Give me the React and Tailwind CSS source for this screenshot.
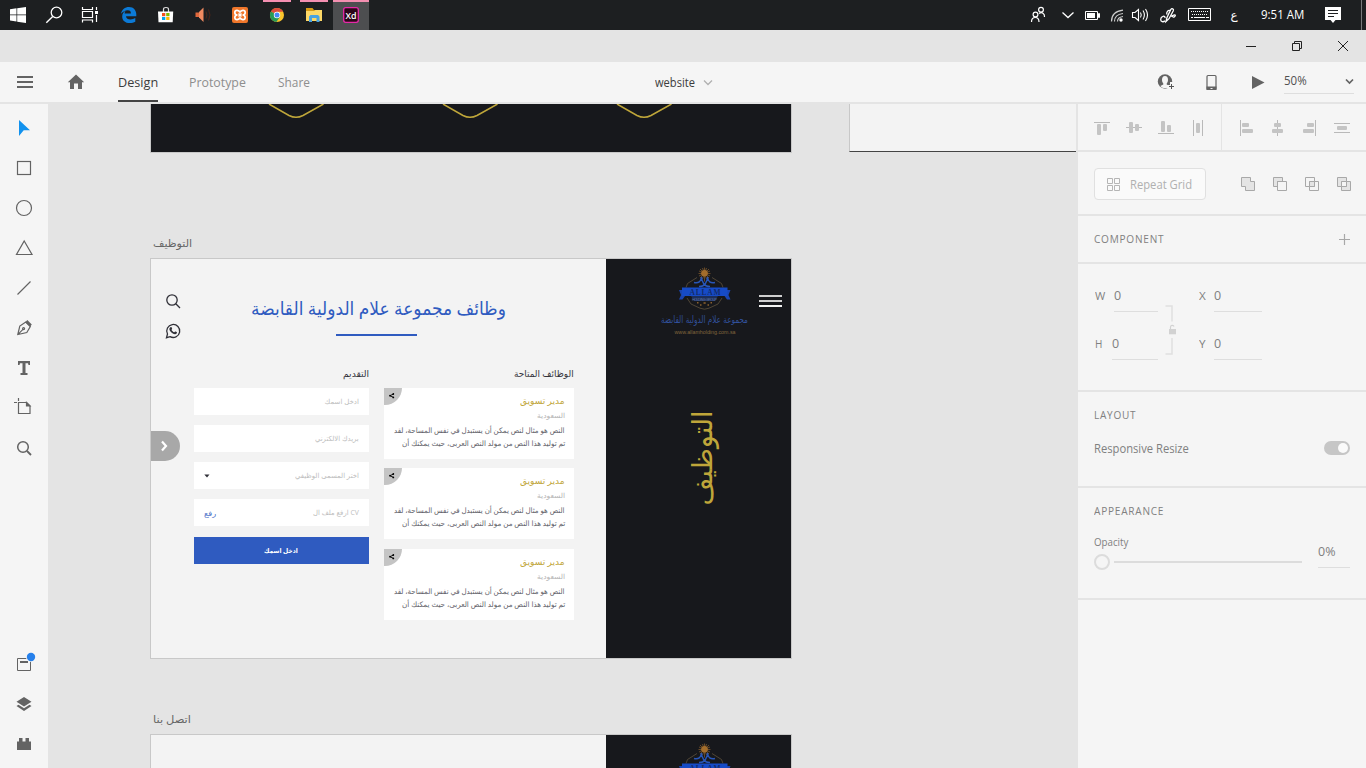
import { useLayoutEffect, useRef } from "react";

/* Single line of text stretched horizontally to the width of its box. */
function Fit({ className = "", children, rtl = false }) {
  const box = useRef(null);
  const line = useRef(null);
  useLayoutEffect(() => {
    const w = line.current.offsetWidth;
    if (w) line.current.style.transform = `scaleX(${box.current.clientWidth / w})`;
  });
  return (
    <span ref={box} dir="ltr" className={"flex shrink-0 justify-start whitespace-nowrap " + className}>
      <span ref={line} dir={rtl ? "rtl" : "ltr"} className="block shrink-0 origin-left">{children}</span>
    </span>
  );
}

/* Icon cell whose view box is given in window coordinates. */
function Cell({ x, y, w, h, children, className = "" }) {
  return (
    <svg width={w} height={h} viewBox={`${x} ${y} ${w} ${h}`} fill="none" className={"block shrink-0 " + className}>
      {children}
    </svg>
  );
}

function Taskbar() {
  return (
    <div className="flex h-[30px] items-center bg-[#1d1f21] text-white">
      <Cell x={0} y={0} w={36} h={30}>
        <path fill="#fff" d="M10 9.200l6.500-.9v6.200H10zM17.200 8.200L26 7v7.500h-8.800zM10 15.300h6.500v6.200l-6.500-.9zM17.200 15.300H26V23l-8.800-1.300z" />
      </Cell>
      <Cell x={36} y={0} w={36} h={30}>
        <circle cx="56.500" cy="12.500" r="5.300" stroke="#fff" strokeWidth="1.300" />
        <path d="M52.700 16.500L46.300 22.700" stroke="#fff" strokeWidth="1.400" />
      </Cell>
      <Cell x={72} y={0} w={36} h={30}>
        <path d="M82.500 7v2.500h10V7M82.500 22.500V20h10v2.500M82.500 11.500h10v6h-10zM96.500 7v3M96.500 15v7" stroke="#fff" strokeWidth="1.200" />
        <rect x="95" y="11" width="3" height="3" fill="#fff" />
      </Cell>
      <div className="ml-[3px] flex gap-px">
        <Cell x={111} y={0} w={36} h={30}>
          <path fill="#0c7ad6" d="M121 13.800C121.800 9.500 125 7 129 7c4.800 0 7.300 3.500 7.300 7.600v1.600h-10.300c.2 2.300 2.100 3.300 4.400 3.300 1.900 0 3.400-.5 4.900-1.400v3.600c-1.500.9-3.400 1.300-5.500 1.300-4.600 0-7.600-2.500-7.600-6.600 0-2.400 1.400-4.500 3.400-5.600-.6.800-.9 1.700-1 2.600h6.300c0-1.900-.9-3.100-3.100-3.100-2.600 0-4.900 1.200-6.800 3.500z" />
        </Cell>
        <Cell x={148} y={0} w={36} h={30}>
          <path d="M163.500 12V9.300c0-2.400 5-2.400 5 0V12" stroke="#ddd" strokeWidth="1.200" />
          <path fill="#fff" d="M158 11.500h15.200l-.5 10.800h-14.200z" />
          <path fill="#f25022" d="M162 13h3.300v3.200H162z" /><path fill="#7fba00" d="M166.200 13h3.300v3.200h-3.300z" />
          <path fill="#00a4ef" d="M162 17h3.300v3H162z" /><path fill="#ffb900" d="M166.200 17h3.300v3h-3.300z" />
        </Cell>
        <Cell x={185} y={0} w={36} h={30}>
          <path fill="#e0683c" d="M195.500 12.500h3.500v4.500h-3.500z" /><path fill="#f08a60" d="M199 12l4.500-4.500v14.500L199 17.500z" />
          <path d="M206 11.500q1.800 3.500 0 7M208.500 9.500q3 5.500 0 11" stroke="#4a2519" strokeWidth="1" />
        </Cell>
        <Cell x={222} y={0} w={36} h={30}>
          <rect x="232" y="7" width="16" height="16" rx="2" fill="#f0762a" />
          <path d="M240 12.500c-.8-2.500-5-3-5.200 0 0 1.700 1.200 2.500 2.700 2.500-1.500 0-2.700.8-2.700 2.500.2 3 4.400 2.500 5.200 0M240 12.500c.8-2.500 5-3 5.200 0 0 1.700-1.200 2.500-2.700 2.500 1.500 0 2.700.8 2.700 2.500-.2 3-4.400 2.500-5.200 0M238.500 13.500l3 3M241.500 13.500l-3 3" stroke="#fff" strokeWidth="1.700" />
        </Cell>
        <Cell x={259} y={0} w={36} h={30}>
          <path fill="#f48fb1" d="M263 0h28v2h-28z" />
          <circle cx="277" cy="15" r="7" fill="#fbc52c" />
          <path fill="#dd4b3e" d="M277 15L270.900 11.500A7 7 0 0 1 283.100 11.700H277z" />
          <path fill="#279a57" d="M277 15L270.900 11.500A7 7 0 0 0 276.300 22L280 17z" />
          <circle cx="277" cy="15" r="3.200" fill="#fff" /><circle cx="277" cy="15" r="2.500" fill="#4688f4" />
        </Cell>
        <Cell x={296} y={0} w={36} h={30}>
          <path fill="#f48fb1" d="M300 0h28v2h-28z" />
          <path fill="#d99b15" d="M306 8h6.500l1.500 2h8v4h-16z" /><path fill="#fdd867" d="M306 11h8l1.500-1H322v11h-16z" />
          <path fill="#4aa3e0" d="M309 22v-5.500l1.500-1.500h7.500l1.500 1.500V22h-3v-4h-4.500v4z" />
        </Cell>
        <Cell x={333} y={0} w={36} h={30} className="bg-[#4d4e50]">
          <path fill="#f48fb1" d="M333 0h36v2h-36z" />
          <rect x="343.700" y="7.700" width="14.600" height="14.600" rx="2" fill="#2b0619" stroke="#e62aa8" strokeWidth="1.300" />
          <text x="345.500" y="18.500" fill="#fff" fontFamily="Open Sans, sans-serif" fontWeight="600" fontSize="9.500" textLength="11" lengthAdjust="spacingAndGlyphs">Xd</text>
        </Cell>
      </div>
      <div className="ml-auto flex items-center">
        <Cell x={1023} y={0} w={30} h={30}>
          <g stroke="#fff" strokeWidth="1.200">
            <circle cx="1041" cy="9.800" r="2.400" /><circle cx="1035.500" cy="14.500" r="2.400" />
            <path d="M1031.500 22c0-6 7.500-6 7.500 0M1039 13.500c3-2 5.800 0 5.500 3.500" />
          </g>
        </Cell>
        <Cell x={1053} y={0} w={30} h={30}><path d="M1062.500 12.500l5.500 5 5.500-5" stroke="#fff" strokeWidth="1.300" /></Cell>
        <Cell x={1083} y={0} w={22} h={30}>
          <path d="M1085.500 11.500h12v8h-12zM1098.500 13.500h1v4h-1z" stroke="#fff" /><path fill="#fff" d="M1087 13h8v5h-8z" />
        </Cell>
        <Cell x={1105} y={0} w={24} h={30}>
          <g strokeWidth="1.200" stroke="#ccc"><path d="M1111.500 21.500q0-10 11.500-11.300" /><path d="M1114.500 21.500q0-7 8.500-8" /><path d="M1117.500 21.500q0-4.300 5.500-5" /></g>
          <circle cx="1121" cy="20" r="1.700" fill="#fff" />
        </Cell>
        <Cell x={1129} y={0} w={25} h={30}>
          <path d="M1132.500 12.500h2.500l3.500-3v11l-3.500-3h-2.500zM1140.500 12.500q1.500 2.500 0 5M1143 10.500q2.800 4.500 0 9M1145.500 9q4 6 0 12" stroke="#fff" strokeWidth="1.100" />
        </Cell>
        <Cell x={1154} y={0} w={30} h={30}>
          <path d="M1166 21.500l1-4 3.800-8c1-1.600 3.300-.6 2.500 1.200l-4.300 8zM1165 18.200c.6-3.400-4.200-2-4.300 1-.1 2.600 2.600 3.300 4.300 1.500M1167 14.500c-1-2 .8-4.500 3-4M1171 16.500c3.500-2.500 5-1.800 4-.3s-2.600 1-2.600-.4" stroke="#fff" strokeWidth="1.300" />
        </Cell>
        <Cell x={1184} y={0} w={34} h={30}>
          <path d="M1188.500 8.500h22v12h-22z" stroke="#fff" />
          <path d="M1191 11.500h18M1192 14.500h16" stroke="#fff" strokeDasharray="1 1" /><path d="M1191 17.500h2M1194 17.500h11M1206 17.500h3" stroke="#fff" />
        </Cell>
        <span className="w-[32px] text-center font-['DejaVu_Sans',sans-serif] text-[12px] leading-[30px]">ع</span>
        <Fit className="ml-[11px] w-[43px] text-[12px] leading-[30px]">9:51 AM</Fit>
        <Cell x={1304} y={0} w={62} h={30}>
          <path fill="#fff" d="M1325 7h16v13h-5.500l-2.500 3-2.500-3H1325z" />
          <path d="M1328 10.500h10M1328 13.500h10M1328 16.500h6" stroke="#1d1f21" /><path d="M1361.500 0v30" stroke="#77797b" />
        </Cell>
      </div>
    </div>
  );
}

function TitleBar() {
  return (
    <div className="flex h-8 justify-end bg-[#e4e4e4]">
      <Cell x={1228} y={30} w={138} h={32}>
        <g stroke="#222" strokeWidth="1">
          <path d="M1246 46.500h10M1292.500 43.500h7v7h-7zM1294.500 43.500v-2h7v7h-2M1338 41l10 10M1348 41l-10 10" />
        </g>
      </Cell>
    </div>
  );
}

function Header() {
  return (
    <div className="flex h-[42px] border-b-2 border-[#e4e4e4] bg-[#f5f5f5] text-[13px] leading-[41px] text-[#8e8e8e]">
      <Cell x={0} y={62} w={118} h={40}>
        <path d="M17 77h16M17 82h16M17 87h16" stroke="#636363" strokeWidth="2" />
        <path fill="#636363" d="M76 74.500l8.200 7.700h-2.200V89h-4v-5.500h-4V89h-4v-6.800h-2.200z" />
      </Cell>
      <div className="h-10 border-b-2 border-[#444] text-[#3c3c3c]"><Fit className="w-[39.500px]">Design</Fit></div>
      <Fit className="ml-[31.500px] w-[57px]">Prototype</Fit>
      <Fit className="ml-8 w-8">Share</Fit>
      <Fit className="ml-[345px] w-[40px] text-[12.500px] text-[#3c3c3c]">website</Fit>
      <Cell x={695} y={62} w={30} h={40}><path d="M704 80.500l4 4 4-4" stroke="#b0b0b0" strokeWidth="1.300" /></Cell>
      <Cell x={1146} y={62} w={138} h={40} className="ml-auto">
        <circle cx="1165" cy="81.500" r="7.200" fill="#636363" />
        <path fill="#f5f5f5" d="M1165 76c2 0 3 1.600 3 3.700 0 1.700-.6 2.900-1.300 3.700v1.200l3 1.500c-2.300 3-7 3-9.400 0l3-1.500v-1.200c-.7-.8-1.300-2-1.300-3.700 0-2.100 1-3.700 3-3.700z" />
        <path d="M1171.500 82v9M1167 86.500h9" stroke="#f5f5f5" strokeWidth="3" /><path d="M1171.500 84v5M1169 86.500h5" stroke="#555" />
        <rect x="1207" y="75.500" width="9" height="14" rx="1" stroke="#636363" strokeWidth="1.200" /><path fill="#636363" d="M1206.500 86.500h10v3.500h-10z" /><path stroke="#eee" d="M1210.500 88.500h2" />
        <path fill="#636363" d="M1252 76l12.500 6.500-12.500 6.500z" />
      </Cell>
      <div className="mr-3 flex h-[32px] w-[70px] items-start justify-between border-b border-[#dedede] text-[#505050]">
        <Fit className="w-[23px] text-[12.500px] leading-[38px]">50%</Fit>
        <svg width="10" height="8" viewBox="0 0 10 8" fill="none" className="mt-4"><path d="M2 1.500l3.500 3.500L9 1.500" stroke="#636363" strokeWidth="1.700" /></svg>
      </div>
    </div>
  );
}

function Tools() {
  return (
    <div className="flex w-12 shrink-0 flex-col justify-between bg-[#f5f5f5]">
      <Cell x={0} y={104} w={48} h={360}>
        <path fill="#1292ee" d="M19 120l11 10.300h-6.300L19 136z" />
        <g stroke="#636363" strokeWidth="1.200">
          <rect x="17.500" y="161.500" width="13" height="13" /><circle cx="24" cy="208" r="7.500" />
          <path d="M24.200 241l7.800 13.500H16.500zM17.500 294.500l13-13" />
          <path d="M17.800 334.500l2-8.500 6-4 4.500 4.500-3.500 6zM18 334.300l5.200-5.200" />
          <circle cx="23.600" cy="328.600" r="1" />
          <path d="M18.500 402.500h8l3.500 3.500v7.500h-11.500zM14 402.500h3M18.500 398v3" />
          <path fill="#636363" d="M26.500 402.500v3.500h3.500z" />
          <circle cx="23" cy="447" r="5.300" strokeWidth="1.500" /><path d="M27 451l4 4" strokeWidth="1.800" />
        </g>
        <path fill="#636363" d="M25.300 322.300l2-2.300 4.500 4.500-1.800 2.300zM18 361h12v4h-1.500l-.5-1.800h-2.500V373h2v2h-7v-2h2v-9.800H20l-.5 1.800H18z" />
      </Cell>
      <Cell x={0} y={648} w={48} h={120}>
        <path d="M17.500 658.500h13v12h-13z" stroke="#636363" /><path d="M20 662h8" stroke="#636363" strokeWidth="2" />
        <circle cx="31" cy="657" r="5" fill="#f5f5f5" /><circle cx="31" cy="657" r="4.200" fill="#2680eb" />
        <path fill="#636363" d="M24 697l7.500 4.800-7.500 4.700-7.500-4.700zM16.500 706l2-1.200 5.500 3.500 5.500-3.500 2 1.200-7.500 5zM17 741.500h2V738h3.500v3.500h3V738H29v3.500h2v8.500H17z" />
      </Cell>
    </div>
  );
}

function Logo() {
  return (
    <svg width="98" height="74" viewBox="656 264 98 74" fill="none" className="mt-[5px] ml-[50px] block shrink-0 overflow-visible">
      <path d="M697 277.500l-9.500 6-1.500 4M712 277.500l9.500 6 1.500 4M687 298l4 6 9 4.200q4.500 2 9 0l9-4.200 4-6" stroke="#5d503c" strokeWidth=".8" />
      <path d="M704.500 267.500v14M698.500 273.500h12M700 269l9 9M709 269l-9 9M702.500 268l4 11M706.500 268l-4 11M699 271l11 5M710 271l-11 5" stroke="#8a602e" strokeWidth=".7" />
      <circle cx="704.500" cy="273.300" r="3.300" fill="#a36d2b" />
      <path d="M694 282.500c4.500 1 7-1 7.500-5.500M715 282.500c-4.500 1-7-1-7.500-5.500M701.500 277.500c0 5 3 5.500 3 8.500 0-3 3-3.500 3-8.500M699 286.500c2 0 4.500-.5 5.500-2 1 1.500 3.500 2 5.500 2" stroke="#2856b8" strokeWidth="1.500" />
      <path d="M679 290h6v6l-2.500 3.500H679l2-4.500zM730.500 290h-6v6l2.500 3.500h3.500l-2-4.500z" fill="#1a45b0" />
      <path d="M682 287.500h45.500v8.500H682z" fill="#164bc7" />
      <text x="689.500" y="294.500" fill="#142c6b" fontFamily="Liberation Serif, serif" fontWeight="700" fontSize="7.500" textLength="31">ALLAM</text>
      <path d="M691 296h27l-3 5h-21z" fill="#1c2f5c" />
      <text x="692" y="300.500" fill="#6479a6" fontFamily="Liberation Sans, sans-serif" fontSize="3.600" textLength="25">HOLDING GROUP</text>
      <path d="M697 302.700h1.500M703.500 303h2.200M710.500 302.700h1.500M700 305h1.500M707.500 305h1.500" stroke="#8a602e" strokeWidth="1.400" />
      <text x="748" y="322.500" direction="rtl" fill="#31509b" fontFamily="DejaVu Sans, sans-serif" fontSize="10" textLength="87" lengthAdjust="spacingAndGlyphs">مجموعة علام الدولية القابضة</text>
      <text x="674.500" y="333.500" fill="#83663d" fontFamily="Liberation Sans, sans-serif" fontSize="5.500" textLength="61" lengthAdjust="spacingAndGlyphs">www.allamholding.com.sa</text>
    </svg>
  );
}

const jobs = ["a", "b", "c"];

function JobCard() {
  return (
    <div dir="rtl" className="flex h-[71px] w-[190px] bg-white">
      <div className="flex w-full flex-col pt-[6px] pr-[9px]">
        <Fit rtl className="w-[45px] text-[9px] leading-[13px] text-[#bfa63a]">مدير تسويق</Fit>
        <Fit rtl className="mt-[3px] w-[28px] text-[7px] leading-[11px] text-[#b4b4b4]">السعودية</Fit>
        <Fit rtl className="mt-[3px] w-[171px] text-[7.500px] leading-[13px] text-[#62626a]">النص هو مثال لنص يمكن أن يستبدل في نفس المساحة، لقد</Fit>
        <Fit rtl className="w-[163px] text-[7.500px] leading-[12px] text-[#62626a]">تم توليد هذا النص من مولد النص العربى، حيث يمكنك أن</Fit>
      </div>
      <div className="-mr-[18px] flex h-[17px] w-[18px] shrink-0 items-center justify-center rounded-br-[17px] bg-[#c4c4c4]">
        <svg width="18" height="17" viewBox="0 0 18 17"><path d="M9.500 6L6 7.700l3.500 1.700" stroke="#111" fill="none" /><circle cx="6" cy="7.700" r=".9" /><circle cx="9.300" cy="6" r=".9" /><circle cx="9.300" cy="9.400" r=".9" /></svg>
      </div>
    </div>
  );
}

function Field({ width, label, children }) {
  return (
    <div dir="rtl" className="flex h-[27px] items-center justify-between bg-white px-[10px]">
      <Fit rtl className={"text-[7px] leading-[26px] text-[#bdbdbd] " + width}>{label}</Fit>
      {children}
    </div>
  );
}

function JobsArtboard() {
  return (
    <div className="flex h-[401px] w-[642px] shrink-0 border border-[#c8c8c8] bg-[#f3f3f3]">
      <div className="flex w-[42px] shrink-0 flex-col">
        <Cell x={151} y={259} w={42} h={172}>
          <g stroke="#303038" strokeWidth="1.300">
            <circle cx="172" cy="300" r="5.200" /><path d="M175.800 303.800l4.200 4.200" />
            <path d="M166.500 337.700l1-3.700a6.500 6.500 0 1 1 2.500 2.600z" />
          </g>
          <path fill="#303038" d="M170.400 327.200c.8-.5 1.300-.1 1.700 1.200.2.600-.3.900-.6 1.300.7 1.300 1.500 2.100 2.800 2.600.5-.4.800-1 1.400-.7 1.400.600 1.500.9 1.100 1.700-1.400 1.900-4.400.3-5.900-1.300-1.500-1.700-2.300-3.700-.5-4.800z" />
        </Cell>
        <div className="flex h-[29.500px] w-[29px] items-center justify-center rounded-r-full bg-[#a8a8a8]">
          <svg width="10" height="14" viewBox="0 0 10 14" fill="none" className="-ml-1"><path d="M3 2.500L7 7l-4 4.500" stroke="#fff" strokeWidth="2.200" /></svg>
        </div>
      </div>
      <div className="flex w-[413px] shrink-0 flex-col">
        <Fit rtl className="mt-[37px] ml-[58px] w-[255px] text-[18.500px] leading-[24px] text-[#2f5bc0]">وظائف مجموعة علام الدولية القابضة</Fit>
        <div className="mt-[13.500px] ml-[143px] h-[2px] w-[81px] bg-[#2f5bc0]" />
        <div className="mt-[32.500px] flex">
          <div className="flex w-[176px] flex-col items-end">
            <Fit rtl className="w-[26px] text-[9.500px] leading-[12px] text-[#33333b]">التقديم</Fit>
            <div className="mt-[8px] flex w-[175.400px] flex-col gap-[10px] pr-[.4px]">
              <Field width="w-[34px]" label="ادخل اسمك" />
              <Field width="w-[44px]" label="بريدك الالكترني" />
              <Field width="w-[64px]" label="اختر المسمى الوظيفي">
                <svg width="6" height="4" viewBox="0 0 6 4"><path fill="#303038" d="M.3.500h5.200L3 3.500z" /></svg>
              </Field>
              <Field width="w-[46px]" label="CV ارفع ملف ال">
                <Fit rtl className="w-[12px] text-[7.500px] leading-[26px] text-[#4c72c8]">رفع</Fit>
              </Field>
            </div>
            <div className="mt-[11px] flex h-[27px] w-[175.400px] justify-center bg-[#2f5bc0]">
              <Fit rtl className="w-[34px] text-[6.500px] leading-[27px] font-bold text-white">ادخل اسمك</Fit>
            </div>
          </div>
          <div className="ml-[15px] flex flex-col items-end">
            <Fit rtl className="w-[60px] text-[9.500px] leading-[12px] text-[#33333b]">الوظائف المتاحة</Fit>
            <div className="mt-[8px] flex flex-col gap-[9.300px]">
              {jobs.map((k) => <JobCard key={k} />)}
            </div>
          </div>
        </div>
      </div>
      <div className="flex w-[185px] shrink-0 flex-col bg-[#17181c]">
        <div className="flex">
          <Logo />
          <div className="mt-[36px] ml-[5px] flex w-[23px] flex-col gap-[3px]">
            <div className="h-[2px] bg-[#cfcfcf]" /><div className="h-[2px] bg-[#cfcfcf]" /><div className="h-[2px] bg-[#f2f2f2]" />
          </div>
        </div>
        <div className="mt-[71.500px] ml-[76px] flex h-[97px] w-[36px] items-center justify-center">
          <div className="-rotate-90"><Fit rtl className="w-[95px] text-[28px] leading-[36px] text-[#bfa63a]">التوظيف</Fit></div>
        </div>
      </div>
    </div>
  );
}

function Canvas() {
  return (
    <div className="flex min-w-0 flex-1 justify-between overflow-hidden bg-[#e4e4e4] pl-[102px]">
      <div className="flex w-[642px] shrink-0 flex-col">
        <div className="h-[49px] shrink-0 border-r border-b border-l border-[#c8c8c8] bg-[#17181c]">
          <svg width="640" height="48" viewBox="151 104 640 48" fill="none" className="block">
            <g stroke="#bfa63a" strokeWidth="1.500">
              <path d="M269 104l20 11.500q7 3.500 14 0l20.500-11.500" /><path d="M443 104l20 11.500q7 3.500 14 0l20.500-11.500" /><path d="M617 104l20 11.500q7 3.500 14 0l20.500-11.500" />
            </g>
          </svg>
        </div>
        <Fit rtl className="mt-[83px] ml-[3px] h-[22px] w-[39px] text-[10.500px] leading-[14px] text-[#666]">التوظيف</Fit>
        <JobsArtboard />
        <Fit rtl className="mt-[53px] ml-[3px] h-[22px] w-[38px] text-[10.500px] leading-[14px] text-[#666]">اتصل بنا</Fit>
        <div className="flex h-[401px] shrink-0 justify-end border border-[#c8c8c8] bg-[#f3f3f3]">
          <div className="w-[185px] bg-[#17181c]"><Logo /></div>
        </div>
      </div>
      <div className="h-[48px] w-[227px] border-b border-l border-b-[#444] border-l-[#c8c8c8] bg-[#f3f3f3]" />
    </div>
  );
}

function Num({ label, labelW, lineW, gap }) {
  return (
    <div className="flex">
      <Fit className={"text-[10px] leading-[17px] " + labelW}>{label}</Fit>
      <div className={"h-[24px] border-b border-[#dedede] " + gap + " " + lineW}><Fit className="w-[7px] text-[12.500px] leading-[16px]">0</Fit></div>
    </div>
  );
}

function Inspector() {
  return (
    <div className="flex w-[290px] shrink-0 flex-col border-l-2 border-[#e4e4e4] bg-[#f5f5f5] text-[#808080]">
      <div className="h-12 border-b-2 border-[#e4e4e4]">
        <Cell x={1078} y={104} w={288} h={46}>
          <g stroke="#b9b9b9">
            <path d="M1094 122.500h16M1126 127.500h16M1158 133.500h16M1193.500 120v16M1202.500 120v16M1240.500 120v16M1277.500 120v16M1315.500 120v16M1334 123.500h16M1334 132.500h16" />
          </g>
          <path d="M1221.500 104v46" stroke="#e4e4e4" />
          <g fill="#c4c4c4">
            <rect x="1097" y="124" width="4" height="11" rx="1" /><rect x="1103" y="124" width="4" height="7" rx="1" />
            <rect x="1129" y="122" width="4" height="11" rx="1" /><rect x="1135" y="124" width="4" height="7" rx="1" />
            <rect x="1161" y="121" width="4" height="11" rx="1" /><rect x="1167" y="125" width="4" height="7" rx="1" />
            <rect x="1196" y="123" width="4" height="10" rx="1" />
            <rect x="1242" y="123" width="7" height="4" rx="1" /><rect x="1242" y="129" width="11" height="4" rx="1" />
            <rect x="1274" y="123" width="7" height="4" rx="1" /><rect x="1272" y="129" width="11" height="4" rx="1" />
            <rect x="1307" y="123" width="7" height="4" rx="1" /><rect x="1303" y="129" width="11" height="4" rx="1" />
            <rect x="1337" y="126" width="10" height="4" rx="1" />
          </g>
        </Cell>
      </div>
      <div className="flex h-16 items-center justify-between border-b-2 border-[#e4e4e4] pl-4">
        <div className="mt-0.5 flex h-8 w-[112px] items-center rounded border border-[#e0e0e0] bg-[#fafafa]">
          <svg width="13" height="13" viewBox="0 0 13 13" fill="none" stroke="#b5b5b5" className="ml-3"><path d="M.5.500h5v5h-5zM7.500.5h5v5h-5zM.5 7.500h5v5h-5zM7.500 7.500h5v5h-5z" /></svg>
          <Fit className="ml-[10px] w-[62px] pt-px text-[12.500px] leading-[30px] text-[#b0b0b0]">Repeat Grid</Fit>
        </div>
        <Cell x={1236} y={168} w={130} h={32} className="mt-0.5">
          <g stroke="#a8a8a8">
            <path fill="#e4e4e4" d="M1241.500 177.500h9v4h4v9h-9v-4h-4z" />
            <path fill="#e4e4e4" d="M1273.500 177.500h9v4h-5v5h-4z" /><path d="M1277.500 181.500h9v9h-9z" />
            <path d="M1305.500 177.500h9v9h-9zM1309.500 181.500h9v9h-9z" /><path fill="#e4e4e4" d="M1309.500 181.500h5v5h-5z" />
            <path fill="#e4e4e4" d="M1337.500 177.500h9v9h-9zM1341.500 181.500h9v9h-9z" /><path fill="#f5f5f5" d="M1341.500 181.500h5v5h-5z" />
          </g>
        </Cell>
      </div>
      <div className="flex h-12 items-center justify-between border-b-2 border-[#e4e4e4] px-4">
        <Fit className="w-[70px] text-[10.500px] leading-[46px] tracking-[.8px]">COMPONENT</Fit>
        <svg width="11" height="11" viewBox="0 0 11 11"><path d="M5.500 0v11M0 5.500h11" stroke="#a8a8a8" strokeWidth="1.200" /></svg>
      </div>
      <div className="flex h-32 border-b-2 border-[#e4e4e4] pt-[24px] pl-[17px]">
        <div className="flex flex-col gap-6">
          <Num label="W" labelW="w-[10px]" gap="ml-[9px]" lineW="w-[44px]" />
          <Num label="H" labelW="w-[7px]" gap="ml-[10px]" lineW="w-[46px]" />
        </div>
        <Cell x={1158} y={296} w={41} h={64} className="mt-2">
          <path d="M1165.500 306h6.500v15.500M1165.500 354h6.500v-16" stroke="#e0e0e0" strokeWidth="1.500" />
          <path fill="#d2d2d2" d="M1169 329h7v5.300h-7z" /><path d="M1170.500 329v-2c0-2 3-2.300 3.500-.5" stroke="#d2d2d2" strokeWidth="1.200" />
        </Cell>
        <div className="flex flex-col gap-6">
          <Num label="X" labelW="w-[6.5px]" gap="ml-[8.5px]" lineW="w-[48px]" />
          <Num label="Y" labelW="w-[6.5px]" gap="ml-[8.5px]" lineW="w-[48px]" />
        </div>
      </div>
      <div className="h-24 border-b-2 border-[#e4e4e4] pt-4 pl-4 pr-4">
        <Fit className="w-[42px] text-[10.500px] leading-[15px] tracking-[.8px]">LAYOUT</Fit>
        <div className="mt-[16px] flex items-center justify-between">
          <Fit className="w-[95px] text-[12.500px] leading-[20px]">Responsive Resize</Fit>
          <div className="mb-0.5 flex h-[14px] w-[26px] items-center justify-end rounded-full bg-[#c6c6c6] pr-[2px]"><div className="size-[10px] rounded-full bg-[#fafafa]" /></div>
        </div>
      </div>
      <div className="h-28 border-b-2 border-[#e4e4e4] pt-4 pl-4 pr-4">
        <Fit className="w-[70px] text-[10.500px] leading-[15px] tracking-[.8px]">APPEARANCE</Fit>
        <div className="mt-[16px] flex justify-between">
          <div>
            <Fit className="w-[34px] text-[10px] leading-[15px]">Opacity</Fit>
            <div className="mt-[4px] flex items-center gap-1">
              <div className="size-4 rounded-full border-2 border-[#dcdcdc]" /><div className="h-[2px] w-[188px] bg-[#dcdcdc]" />
            </div>
          </div>
          <div className="mt-[7px] h-[26px] w-8 border-b border-[#dedede]"><Fit className="w-[17px] text-[12.500px] leading-[20px]">0%</Fit></div>
        </div>
      </div>
    </div>
  );
}

export default function App() {
  return (
    <div className="flex h-[768px] w-[1366px] flex-col overflow-hidden bg-[#e4e4e4] font-['Open_Sans','DejaVu_Sans',sans-serif]">
      <Taskbar />
      <TitleBar />
      <Header />
      <div className="flex min-h-0 flex-1">
        <Tools />
        <Canvas />
        <Inspector />
      </div>
    </div>
  );
}
